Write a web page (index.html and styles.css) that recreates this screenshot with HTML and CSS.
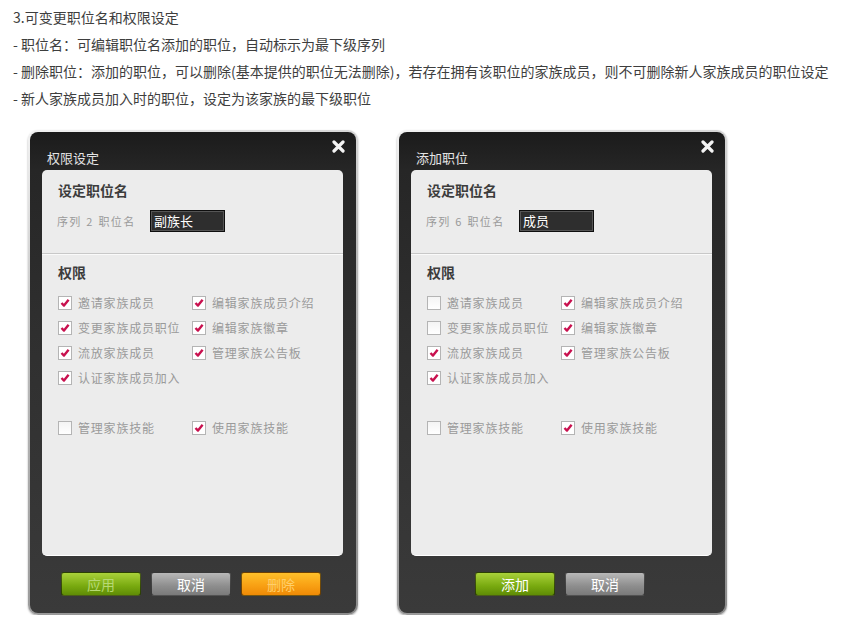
FILE: index.html
```html
<!DOCTYPE html>
<html lang="zh">
<head>
<meta charset="utf-8">
<link rel="stylesheet" href="styles.css">
</head>
<body>
<div class="notes">
  <p>3.可变更职位名和权限设定</p>
  <p>- 职位名：可编辑职位名添加的职位，自动标示为最下级序列</p>
  <p>- 删除职位：添加的职位，可以删除(基本提供的职位无法删除)，若存在拥有该职位的家族成员，则不可删除新人家族成员的职位设定</p>
  <p>- 新人家族成员加入时的职位，设定为该家族的最下级职位</p>
</div>

<div class="dialogs">
  <div class="dialog">
    <div class="frame">
      <div class="titlebar">
        <span class="title">权限设定</span>
        <svg class="close" width="13" height="13" viewBox="0 0 13 13"><path d="M2 2 L11 11 M11 2 L2 11" stroke="#f4f4f4" stroke-width="3.2" stroke-linecap="round"/></svg>
      </div>
      <div class="panel">
        <div class="section top">
          <div class="heading">设定职位名</div>
          <div class="namerow">
            <span class="label">序列 2 职位名</span>
            <span class="input">副族长</span>
          </div>
        </div>
        <div class="section">
          <div class="heading">权限</div>
          <div class="grid">
            <label class="cb on">邀请家族成员</label>
            <label class="cb on">编辑家族成员介绍</label>
            <label class="cb on">变更家族成员职位</label>
            <label class="cb on">编辑家族徽章</label>
            <label class="cb on">流放家族成员</label>
            <label class="cb on">管理家族公告板</label>
            <label class="cb on">认证家族成员加入</label>
            <span></span>
            <span class="spacer"></span>
            <span class="spacer"></span>
            <label class="cb">管理家族技能</label>
            <label class="cb on">使用家族技能</label>
          </div>
        </div>
      </div>
      <div class="footer">
        <span class="btn green dim">应用</span>
        <span class="btn gray">取消</span>
        <span class="btn orange dim">删除</span>
      </div>
    </div>
  </div>

  <div class="dialog">
    <div class="frame">
      <div class="titlebar">
        <span class="title">添加职位</span>
        <svg class="close" width="13" height="13" viewBox="0 0 13 13"><path d="M2 2 L11 11 M11 2 L2 11" stroke="#f4f4f4" stroke-width="3.2" stroke-linecap="round"/></svg>
      </div>
      <div class="panel">
        <div class="section top">
          <div class="heading">设定职位名</div>
          <div class="namerow">
            <span class="label">序列 6 职位名</span>
            <span class="input">成员</span>
          </div>
        </div>
        <div class="section">
          <div class="heading">权限</div>
          <div class="grid">
            <label class="cb">邀请家族成员</label>
            <label class="cb on">编辑家族成员介绍</label>
            <label class="cb">变更家族成员职位</label>
            <label class="cb on">编辑家族徽章</label>
            <label class="cb on">流放家族成员</label>
            <label class="cb on">管理家族公告板</label>
            <label class="cb on">认证家族成员加入</label>
            <span></span>
            <span class="spacer"></span>
            <span class="spacer"></span>
            <label class="cb">管理家族技能</label>
            <label class="cb on">使用家族技能</label>
          </div>
        </div>
      </div>
      <div class="footer">
        <span class="btn green">添加</span>
        <span class="btn gray">取消</span>
      </div>
    </div>
  </div>
</div>
</body>
</html>
```

FILE: styles.css
```css
* { box-sizing: border-box; }
html, body { margin: 0; padding: 0; background: #fff; }
body {
  font-family: "Noto Sans CJK SC", "Noto Sans", sans-serif;
  color: #333;
}
.notes { padding: 4px 0 0 13px; }
.notes p {
  margin: 0;
  font-size: 14px;
  line-height: 27px;
  color: #3e3e3e;
  white-space: nowrap;
}
.dialogs {
  display: flex;
  gap: 39px;
  margin: 18px 0 0 28px;
}
.dialog {
  width: 330px;
  height: 485px;
  padding: 2px;
  border-radius: 10px;
  background: linear-gradient(160deg, #f2f2f2 0%, #b8b8b8 40%, #8c8c8c 100%);
  box-shadow: 0 1px 2px rgba(0,0,0,0.35);
}
.frame {
  height: 100%;
  border-radius: 8px;
  background: linear-gradient(180deg, #1b1b1b 0px, #262626 38px, #2f2f2f 200px, #3a3a3a 100%);
  display: flex;
  flex-direction: column;
}
.titlebar {
  height: 38px;
  display: flex;
  align-items: flex-start;
  justify-content: space-between;
  padding: 18px 11px 0 17px;
}
.title {
  font-size: 13px;
  line-height: 16px;
  color: #e4e4e4;
}
.close { margin-top: -10px; }
.panel {
  margin: 0 13px 0 12px;
  height: 386px;
  background: #ececec;
  border-radius: 5px;
  border-bottom: 1px solid #fff;
}
.section { padding: 0 0 0 15px; }
.section.top {
  padding-top: 10px;
  height: 84px;
  border-bottom: 1px solid #c8c8c8;
  box-shadow: 0 1px 0 #fafafa;
}
.heading {
  font-size: 14px;
  font-weight: bold;
  line-height: 20px;
  color: #3c3c3c;
  padding-left: 1px;
}
.section:not(.top) .heading { padding-top: 8px; }
.namerow {
  display: flex;
  align-items: center;
  margin-top: 10px;
}
.label {
  font-size: 11px;
  color: #9a9a9a;
  width: 93px;
  letter-spacing: 1.3px;
  word-spacing: 1px;
}
.input {
  width: 75px;
  height: 22px;
  background: #2e2e2e;
  border: 1px solid #0e0e0e;
  box-shadow: inset 0 0 0 1px #555;
  color: #fff;
  font-size: 13px;
  line-height: 20px;
  padding-left: 3px;
}
.grid {
  display: grid;
  grid-template-columns: 134px 150px;
  grid-auto-rows: 25px;
  margin-top: 8px;
  padding-left: 1px;
}
.spacer { height: 25px; }
.cb {
  display: flex;
  align-items: center;
  font-size: 12px;
  letter-spacing: 0.8px;
  color: #9a9a9a;
  white-space: nowrap;
}
.cb::before {
  content: "";
  width: 12px;
  height: 12px;
  margin-right: 6px;
  flex: none;
  border: 1px solid #b4b4b4;
  background: linear-gradient(#f4f4f4, #fff);
}
.cb.on::before {
  background:
    url("data:image/svg+xml;utf8,<svg xmlns='http://www.w3.org/2000/svg' width='10' height='10' viewBox='0 0 10 10'><path d='M1.5 5 L4 7.6 L8.6 1.8' fill='none' stroke='%23c8104e' stroke-width='2.4' stroke-linejoin='round'/></svg>") center/10px 10px no-repeat,
    #fff;
}
.footer {
  display: flex;
  justify-content: center;
  gap: 10px;
  padding: 16px 4px 0 0;
}
.btn {
  width: 80px;
  height: 24px;
  border-radius: 3px;
  display: flex;
  align-items: center;
  justify-content: center;
  font-size: 14px;
  color: #fff;
  border: 1px solid rgba(0,0,0,0.55);
}
.green { background: linear-gradient(#a9d13a, #78a90f 60%, #5f8c06); }
.gray { background: linear-gradient(#b8b8b8, #8d8d8d 60%, #7a7a7a); }
.orange { background: linear-gradient(#ffc02a, #f9a114 55%, #ee8a06); }
.green.dim { color: #b6d874; }
.orange.dim { color: #ffcf6a; }
```
